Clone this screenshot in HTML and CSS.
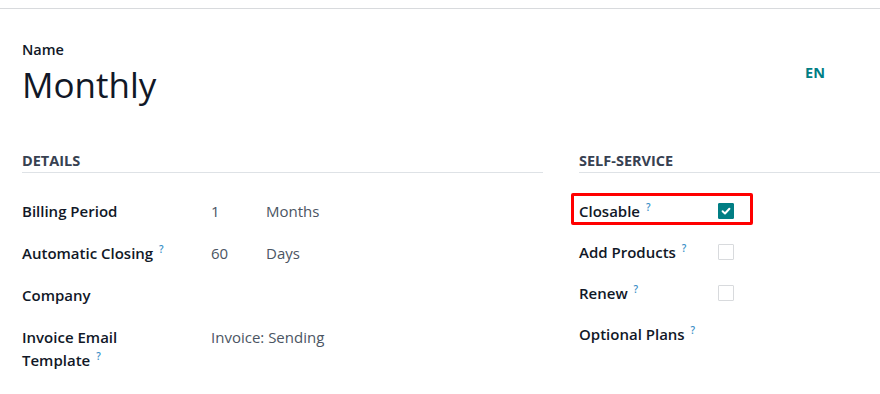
FILE: index.html
```html
<!DOCTYPE html>
<html lang="en">
<head>
<meta charset="utf-8">
<title>Monthly</title>
<link rel="stylesheet" href="styles.css">
</head>
<body>
<div class="topbar"></div>
<div class="sheet">
  <div class="title-row">
    <div class="title-block">
      <div class="name-label">Name</div>
      <div class="name-value">Monthly</div>
    </div>
    <div class="lang">EN</div>
  </div>
  <div class="groups">
    <div class="group group-left">
      <div class="group-title">Details</div>
      <div class="rows left-rows">
        <div class="label">Billing Period</div>
        <div class="value">1</div>
        <div class="value">Months</div>

        <div class="label">Automatic Closing <sup class="help">?</sup></div>
        <div class="value">60</div>
        <div class="value">Days</div>

        <div class="label">Company</div>
        <div class="value"></div>
        <div class="value"></div>

        <div class="label">Invoice Email<br>Template <sup class="help">?</sup></div>
        <div class="value span2">Invoice: Sending</div>
      </div>
    </div>
    <div class="group group-right">
      <div class="group-title">Self-Service</div>
      <div class="rows right-rows">
        <div class="rrow highlighted">
          <div class="label rlabel">Closable <sup class="help">?</sup></div>
          <span class="check checked"><svg viewBox="0 0 16 16" width="16" height="16"><path d="M4.6 8.3 L7 10.5 L11.4 5.8" fill="none" stroke="#fff" stroke-width="2" stroke-linecap="round" stroke-linejoin="round"/></svg></span>
          <div class="highlight"></div>
        </div>
        <div class="rrow">
          <div class="label rlabel">Add Products <sup class="help">?</sup></div>
          <span class="check"></span>
        </div>
        <div class="rrow">
          <div class="label rlabel">Renew <sup class="help">?</sup></div>
          <span class="check"></span>
        </div>
        <div class="rrow">
          <div class="label rlabel">Optional Plans <sup class="help">?</sup></div>
        </div>
      </div>
    </div>
  </div>
</div>
</body>
</html>
```
FILE: styles.css
```css
html, body {
  margin: 0;
  padding: 0;
  background: #ffffff;
}
body {
  font-family: "Open Sans", "Noto Sans", sans-serif;
  color: #1f2937;
  font-size: 15px;
  width: 880px;
  height: 394px;
  overflow: hidden;
}
.topbar {
  height: 8px;
  border-bottom: 1px solid #d8dadd;
}
.sheet {
  padding-left: 22px;
}
.title-row {
  display: flex;
  justify-content: space-between;
  align-items: flex-start;
  padding-right: 55px;
  margin-top: 31px;
}
.name-label {
  font-weight: 600;
  font-size: 14.5px;
  line-height: 20px;
  color: #111827;
}
.name-value {
  font-size: 35px;
  line-height: 48px;
  color: #111827;
  margin-top: 1px;
}
.lang {
  margin-top: 23px;
  font-weight: 700;
  font-size: 14.5px;
  line-height: 20px;
  color: #017e84;
}
.groups {
  display: flex;
  margin-top: 41px;
}
.group-left {
  width: 521px;
}
.group-right {
  flex: 1;
  margin-left: 36px;
}
.group-title {
  font-weight: 700;
  text-transform: uppercase;
  font-size: 14.5px;
  line-height: 20px;
  padding-top: 1px;
  padding-bottom: 1px;
  border-bottom: 1px solid #dee2e6;
  color: #374151;
}
.rows {
  padding-top: 27px;
}
.left-rows {
  display: grid;
  grid-template-columns: 189px 55px 1fr;
  grid-auto-rows: minmax(42px, auto);
}
.label {
  font-weight: 600;
  line-height: 23px;
  color: #111827;
}
.value {
  line-height: 23px;
  color: #4b5563;
}
.span2 {
  grid-column: span 2;
}
.help {
  font-size: 10px;
  font-weight: 600;
  color: #3a8fc7;
  vertical-align: top;
  position: relative;
  top: -4px;
  margin-left: 2px;
}
.rrow {
  display: flex;
  align-items: center;
  height: 23px;
  margin-bottom: 18px;
  position: relative;
}
.rlabel {
  width: 139px;
}
.check {
  width: 16px;
  height: 16px;
  box-sizing: border-box;
  border: 1px solid #d8dadd;
  border-radius: 1px;
  display: inline-block;
  margin-top: -2px;
}
.check.checked {
  background: #017e84;
  border-color: #017e84;
  position: relative;
}
.check.checked svg {
  position: absolute;
  left: -1px;
  top: -1px;
}
.highlight {
  position: absolute;
  left: -8px;
  top: -7px;
  width: 182px;
  height: 32px;
  box-sizing: border-box;
  border: 3px solid #ff0000;
  border-radius: 2px;
}
```
